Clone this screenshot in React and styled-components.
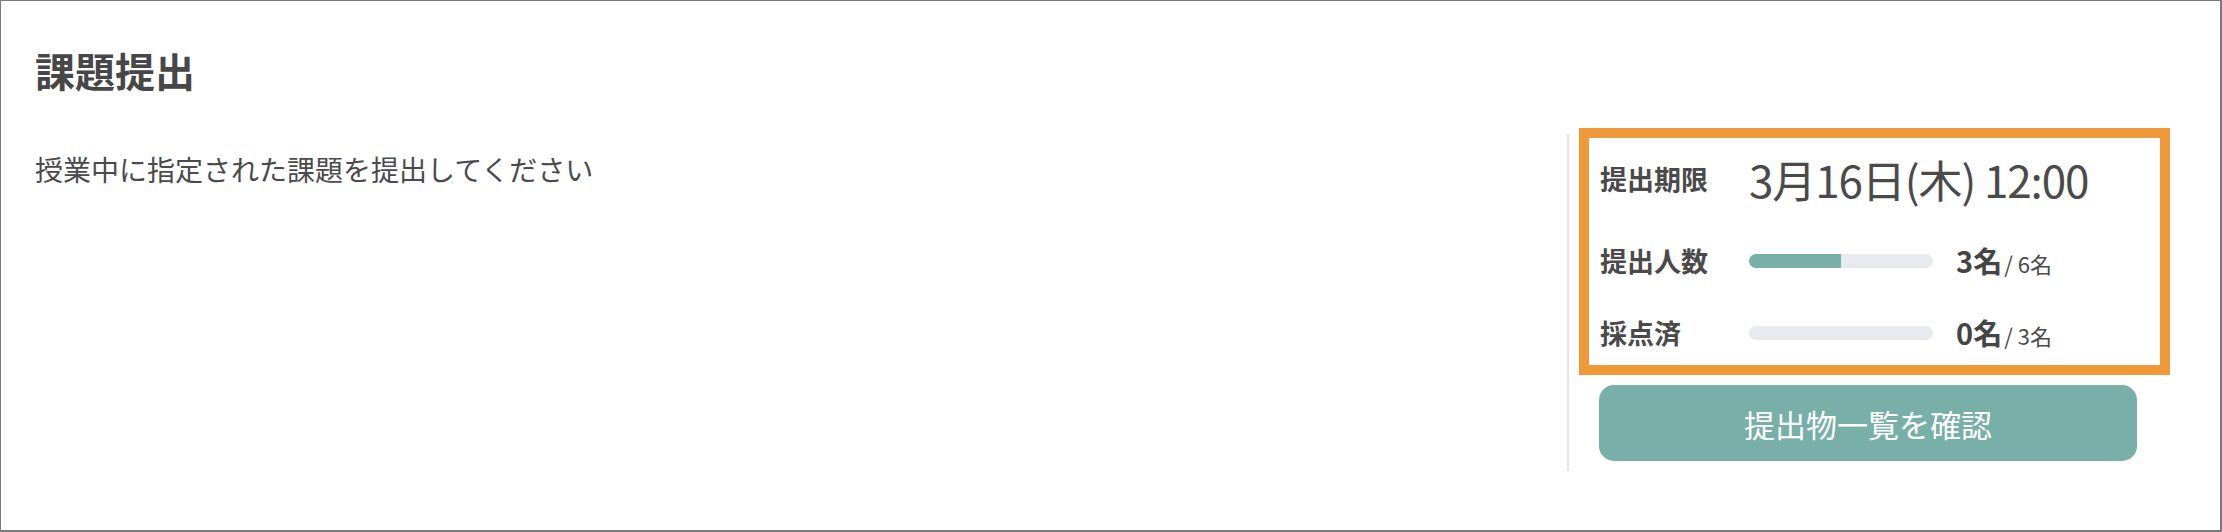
import styled, { createGlobalStyle } from "styled-components";

const GlobalStyle = createGlobalStyle`
  html, body {
    margin: 0;
    padding: 0;
    background: #fff;
  }
  body {
    font-family: "Noto Sans CJK JP", "Noto Sans", sans-serif;
    color: #4a4a4a;
  }
  * {
    box-sizing: border-box;
  }
`;

const Frame = styled.div`
  width: 2222px;
  height: 532px;
  border-style: solid;
  border-color: #7b7b7b;
  border-width: 1px 2px 2px 1px;
  display: flex;
  justify-content: space-between;
  padding: 0 50px 0 34px;
`;

const Main = styled.section`
  display: flex;
  flex-direction: column;
  padding-top: 40px;
`;

const Title = styled.h1`
  margin: 0;
  font-size: 40px;
  line-height: 58px;
  font-weight: 700;
  color: #474747;
`;

const Lead = styled.p`
  margin: 50px 0 0;
  font-size: 28px;
  line-height: 40px;
  font-weight: 400;
  color: #4a4a4a;
`;

const Aside = styled.aside`
  margin-top: 133px;
  height: 337px;
  border-left: 2px solid #e2e2e2;
  padding-left: 10px;
  display: flex;
  flex-direction: column;
`;

const Stats = styled.div`
  margin-top: -6px;
  width: 591px;
  border: 10px solid #f0993a;
  padding: 11px 11px 12px;
  display: grid;
  grid-template-columns: 149px 1fr;
  grid-template-rows: 60px 40px 40px;
  row-gap: 32px;
  align-items: center;
`;

const Label = styled.div`
  font-size: 27px;
  font-weight: 700;
  color: #4a4a4a;
  line-height: 40px;
`;

const Deadline = styled.div`
  font-size: 44px;
  line-height: 60px;
  font-weight: 400;
  color: #4a4a4a;
  white-space: nowrap;
  font-feature-settings: "palt";
  letter-spacing: -1.1px;
`;

const Meter = styled.div`
  display: flex;
  align-items: center;
  gap: 23px;
`;

const Track = styled.div`
  width: 184px;
  height: 14px;
  border-radius: 7px;
  background: #e9eaee;
  overflow: hidden;
`;

const Fill = styled.div`
  height: 100%;
  background: #78afa8;
`;

const Count = styled.div`
  display: flex;
  align-items: baseline;
  white-space: nowrap;
  line-height: 40px;
`;

const Num = styled.span`
  font-size: 29px;
  font-weight: 700;
  color: #454545;
`;

const Total = styled.span`
  font-size: 22px;
  font-weight: 400;
  color: #4a4a4a;
  margin-left: 2px;
`;

const ListButton = styled.button`
  margin: 10px 0 0 20px;
  width: 538px;
  height: 76px;
  border: none;
  border-radius: 15px;
  background: #78afa8;
  color: #fff;
  font-family: inherit;
  font-size: 31px;
  font-weight: 400;
  cursor: pointer;
`;

const rows = [
  { label: "提出人数", done: 3, total: 6 },
  { label: "採点済", done: 0, total: 3 },
];

export default function App() {
  return (
    <>
      <GlobalStyle />
      <Frame>
        <Main>
          <Title>課題提出</Title>
          <Lead>授業中に指定された課題を提出してください</Lead>
        </Main>
        <Aside>
          <Stats>
            <Label>提出期限</Label>
            <Deadline>3月16日(木) 12:00</Deadline>
            {rows.map((r) => (
              <Row key={r.label} {...r} />
            ))}
          </Stats>
          <ListButton>提出物一覧を確認</ListButton>
        </Aside>
      </Frame>
    </>
  );
}

function Row({ label, done, total }) {
  return (
    <>
      <Label>{label}</Label>
      <Meter>
        <Track>
          <Fill style={{ width: `${(done / total) * 100}%` }} />
        </Track>
        <Count>
          <Num>{done}名</Num>
          <Total>/ {total}名</Total>
        </Count>
      </Meter>
    </>
  );
}
